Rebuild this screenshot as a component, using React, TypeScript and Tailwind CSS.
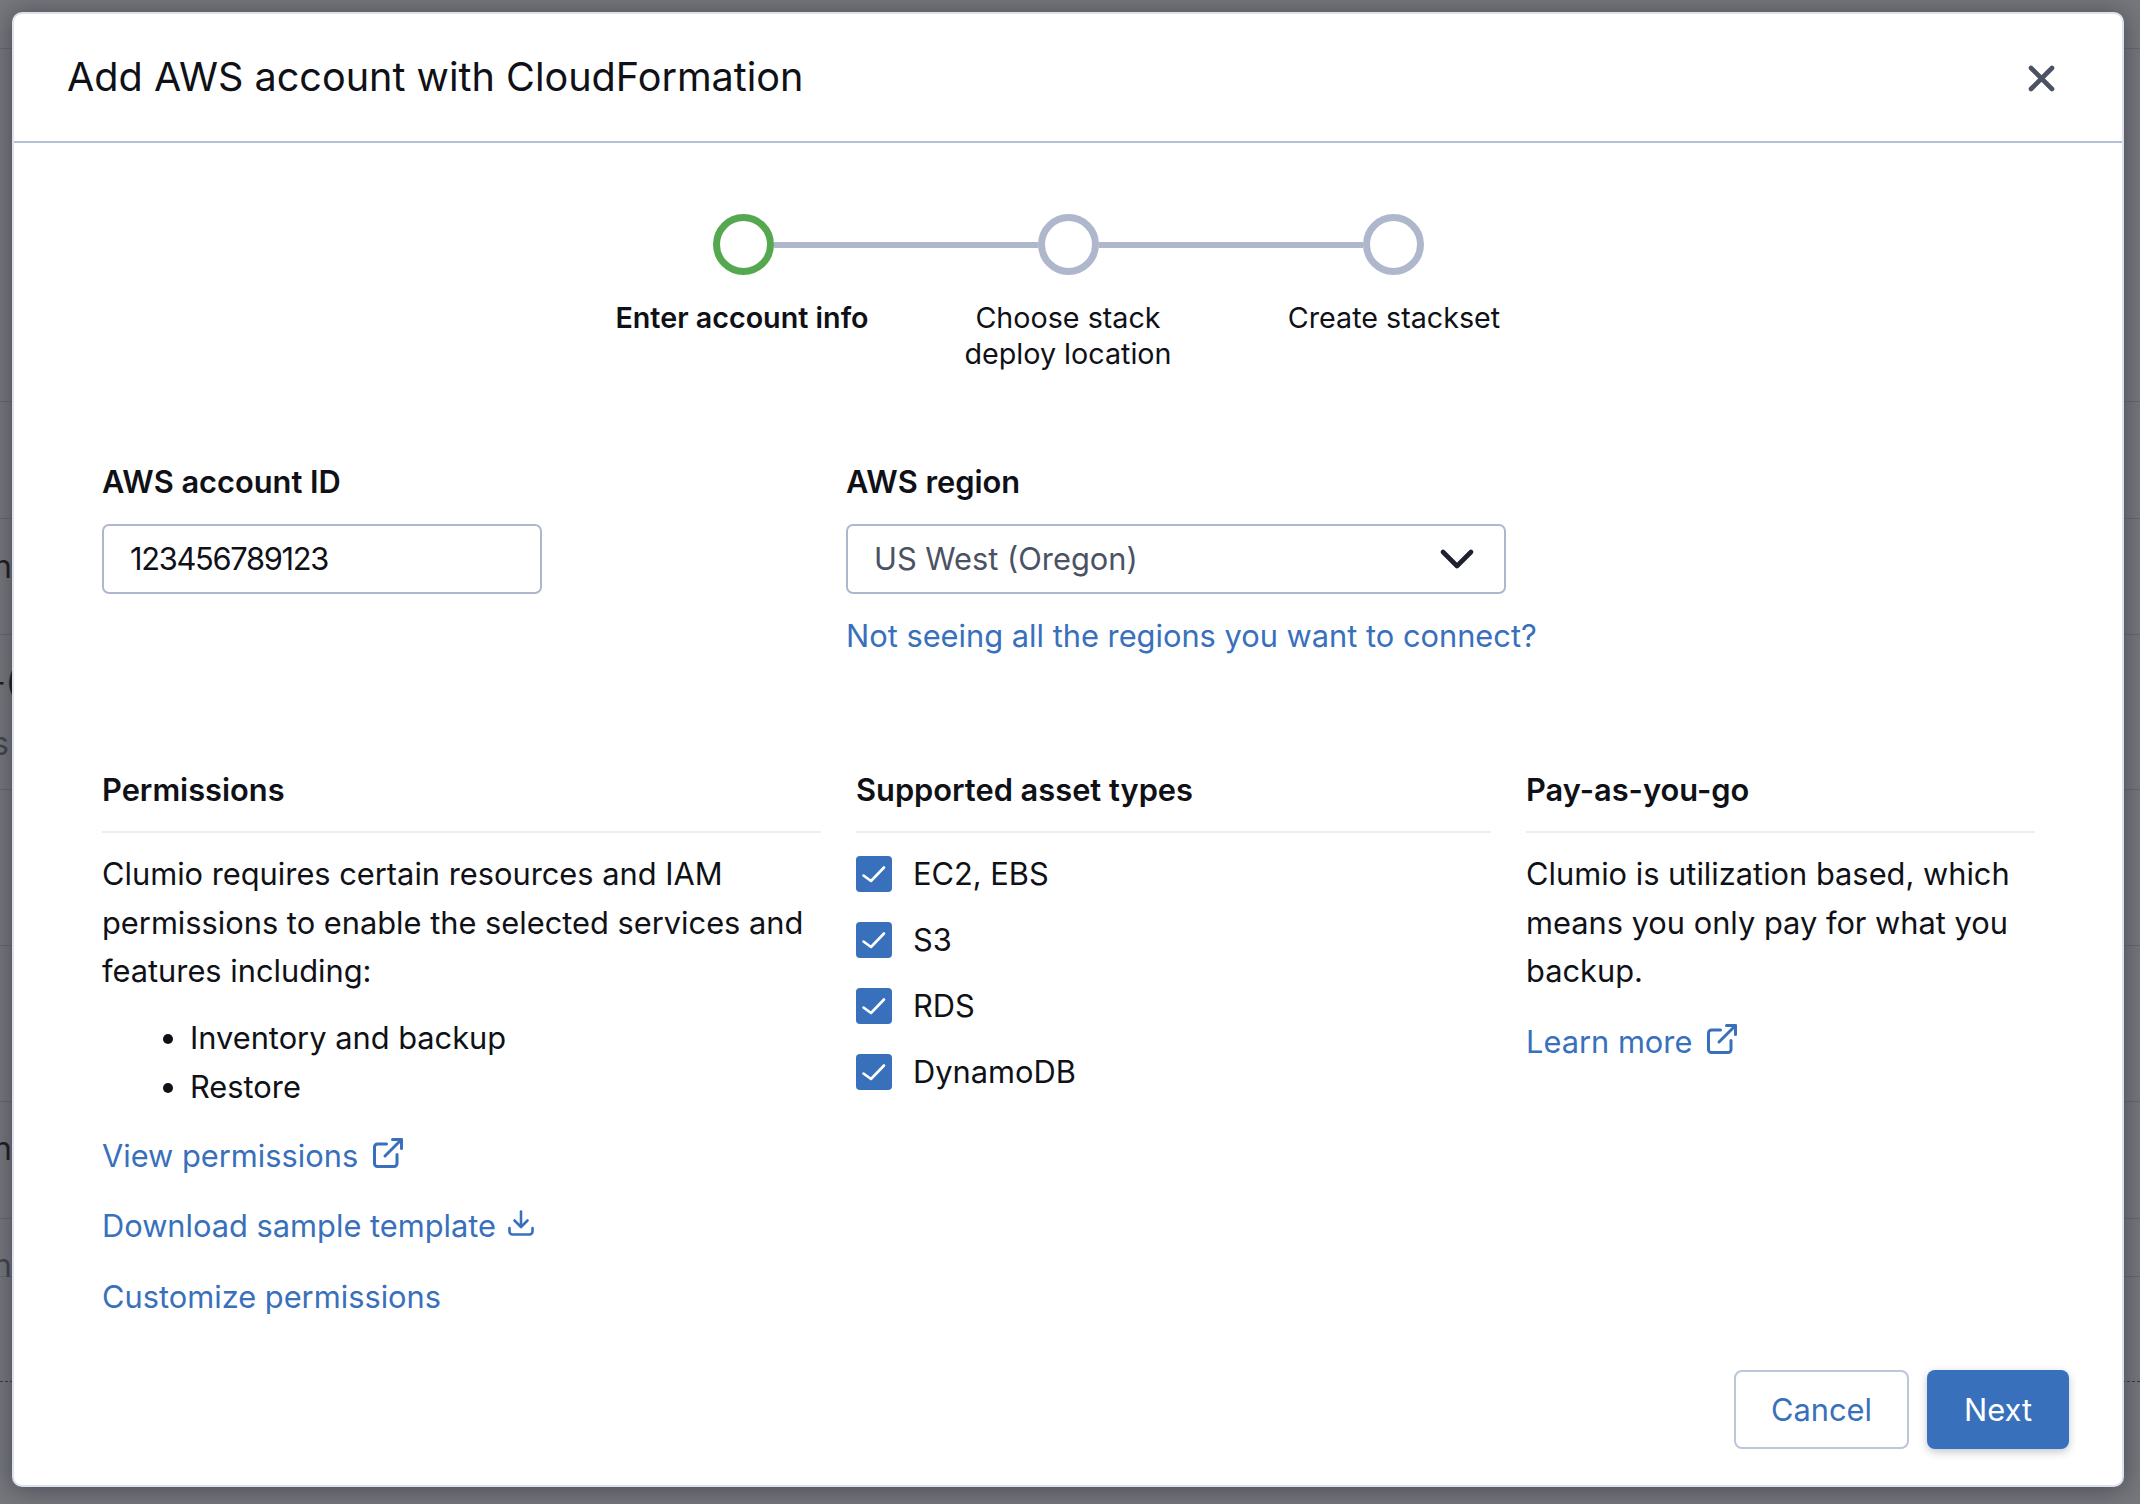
import { ChevronDown, ExternalLink } from 'lucide-react';

function DownloadIcon() {
  return (
    <svg width="26" height="26" viewBox="0 0 26 26" fill="none" stroke="currentColor" strokeWidth="2.6" strokeLinecap="round" strokeLinejoin="round">
      <path d="M13 1.5v15" />
      <path d="M6.5 10.5 13 17l6.5-6.5" />
      <path d="M1.5 18v3.5a3 3 0 0 0 3 3h17a3 3 0 0 0 3-3V18" />
    </svg>
  );
}

function Checkbox() {
  return (
    <span className="flex h-[36px] w-[36px] shrink-0 items-center justify-center rounded-[4px] bg-[#3870bc]">
      <svg width="36" height="36" viewBox="0 0 36 36" fill="none" stroke="#ffffff" strokeWidth="2.6" strokeLinecap="round" strokeLinejoin="round">
        <path d="M7.5 19.5 15 25 28 11.5" />
      </svg>
    </span>
  );
}

function Step({ active }: { active?: boolean }) {
  return (
    <div
      className={`h-[61px] w-[61px] shrink-0 rounded-full border-[7px] ${
        active ? 'border-[#55a84f]' : 'border-[#aeb7cc]'
      }`}
    />
  );
}

export default function App() {
  return (
    <div className="relative h-[1504px] w-full overflow-hidden bg-[#76787c] font-['Inter',sans-serif] text-[30.8px] text-[#0f1117]">
      {/* Page behind the modal */}
      <div className="text-[32px] leading-[36px] text-[#1d1e22]">
        <div className="h-[49px] border-b border-[#666870]" />
        <div className="h-[353px] border-b border-[#666870]" />
        <div className="h-[117px] border-b border-[#666870]" />
        <div className="h-[116px] border-b border-[#666870] pt-[30px] -indent-[7px]">n</div>
        <div className="h-[155px] border-b border-[#666870] pt-[29px]">
          <div className="-indent-[9px]">-(</div>
          <div className="mt-[26px] -indent-[8px] text-[#44464c]">s</div>
        </div>
        <div className="h-[156px] border-b border-[#666870]" />
        <div className="h-[156px] border-b border-[#666870]" />
        <div className="h-[117px] border-b border-[#666870] pt-[29px] -indent-[7px]">n</div>
        <div className="h-[58px] border-b border-[#666870] pt-[29px] -indent-[7px] text-[#44464c]">n</div>
        <div className="h-[105px] border-b border-dashed border-[#3a3c42]" />
      </div>

      {/* Modal */}
      <div className="absolute top-[12px] left-[12px] flex h-[1475px] w-[2112px] flex-col rounded-[10px] border-2 border-[#dde1ee] bg-white shadow-[0_2px_26px_rgba(24,26,48,0.5)]">
        <div className="flex h-[129px] shrink-0 items-center justify-between border-b-2 border-[#b5c0d3] pr-[66px] pl-[53px]">
          <h2 className="pb-[2px] text-[39.6px] leading-[50px] font-normal">Add AWS account with CloudFormation</h2>
          <svg width="30" height="30" viewBox="0 0 30 30" fill="none" stroke="#4a5264" strokeWidth="4.6" strokeLinecap="round">
            <path d="M5 5l21 21M26 5 5 26" />
          </svg>
        </div>

        {/* Stepper */}
        <div className="flex items-center justify-center pt-[71px]">
          <Step active />
          <div className="h-[6px] w-[264px] bg-[#aeb7cc]" />
          <Step />
          <div className="h-[6px] w-[264px] bg-[#aeb7cc]" />
          <Step />
        </div>
        <div className="mx-auto mt-[25px] grid w-[978px] grid-cols-3 text-center text-[28.7px] leading-[35.5px]">
          <div className="font-semibold">Enter account info</div>
          <div>
            Choose stack
            <br />
            deploy location
          </div>
          <div>Create stackset</div>
        </div>

        {/* Account fields */}
        <div className="mt-[91px] flex gap-[304px] pl-[88px]">
          <div className="w-[440px]">
            <div className="leading-[40px] font-semibold">AWS account ID</div>
            <div className="mt-[22px] flex h-[70px] items-center rounded-[7px] border-2 border-[#aeb7cc] pl-[26px] tracking-[-1.3px]">123456789123</div>
          </div>
          <div className="w-[660px]">
            <div className="leading-[40px] font-semibold">AWS region</div>
            <div className="mt-[22px] flex h-[70px] items-center justify-between rounded-[7px] border-2 border-[#aeb7cc] pr-[19px] pl-[26px] text-[#4a5264]">
              US West (Oregon)
              <ChevronDown size={56} strokeWidth={2} className="text-[#1e2230]" />
            </div>
            <a className="mt-[22px] block whitespace-nowrap leading-[40px] text-[#3870bc]">Not seeing all the regions you want to connect?</a>
          </div>
        </div>

        {/* Info columns */}
        <div className="mt-[114px] flex gap-[35px] pl-[88px]">
          <div className="w-[719px]">
            <div className="h-[63px] border-b-2 border-[#eceef3] leading-[40px] font-semibold">Permissions</div>
            <p className="mt-[17px] leading-[48.5px]">
              Clumio requires certain resources and IAM permissions to enable the selected services and features including:
            </p>
            <ul className="mt-[17px] list-disc pl-[88px] leading-[49px]">
              <li>Inventory and backup</li>
              <li>Restore</li>
            </ul>
            <div className="mt-[25px] flex flex-col gap-[30.5px] leading-[40px] text-[#3870bc]">
              <a className="flex items-center gap-[12px]">
                View permissions
                <ExternalLink size={36} strokeWidth={2} className="-mt-[6px]" />
              </a>
              <a className="flex items-center gap-[12px]">
                Download sample template
                <span className="-mt-[6px]"><DownloadIcon /></span>
              </a>
              <a>Customize permissions</a>
            </div>
          </div>
          <div className="w-[635px]">
            <div className="h-[63px] border-b-2 border-[#eceef3] leading-[40px] font-semibold">Supported asset types</div>
            <div className="mt-[23px] flex flex-col gap-[30px]">
              {['EC2, EBS', 'S3', 'RDS', 'DynamoDB'].map((label) => (
                <div key={label} className="flex h-[36px] items-center gap-[21px]">
                  <Checkbox />
                  {label}
                </div>
              ))}
            </div>
          </div>
          <div className="w-[509px]">
            <div className="h-[63px] border-b-2 border-[#eceef3] leading-[40px] font-semibold">Pay-as-you-go</div>
            <p className="mt-[17px] leading-[48.5px]">
              Clumio is utilization based, which means you only pay for what you backup.
            </p>
            <a className="mt-[26px] flex items-center gap-[12px] leading-[40px] text-[#3870bc]">
              Learn more
              <ExternalLink size={36} strokeWidth={2} className="-mt-[6px]" />
            </a>
          </div>
        </div>

        {/* Footer */}
        <div className="mt-auto flex justify-end gap-[18px] pr-[53px] pb-[36px]">
          <button className="h-[79px] w-[175px] rounded-[8px] border-2 border-[#bcc6d9] pt-[1px] text-[#3870bc]">Cancel</button>
          <button className="h-[79px] w-[142px] rounded-[8px] bg-[#3870bc] pt-[1px] text-white shadow-[0_3px_8px_rgba(20,30,60,0.25)]">Next</button>
        </div>
      </div>
    </div>
  );
}
